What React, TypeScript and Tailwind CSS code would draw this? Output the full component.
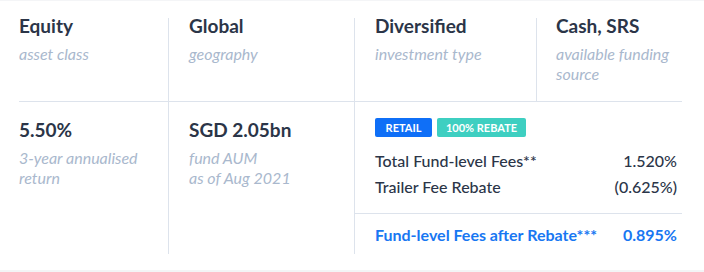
import React from "react";

const Title = ({ children }: { children: React.ReactNode }) => (
  <div className="text-[19px] leading-[16px] font-bold text-[#2b3548] whitespace-nowrap">{children}</div>
);

const Caption = ({ children, mt = "mt-[10px]" }: { children: React.ReactNode; mt?: string }) => (
  <div className={`${mt} text-[16px] leading-[20px] italic text-[#a9b8cd]`}>{children}</div>
);

export default function App() {
  return (
    <div className="w-[704px] h-[272px] bg-white border-t border-[#f4f5f7] font-['Lato',sans-serif] relative">
      <div className="ml-[19px] mt-[17px] w-[663px] grid grid-cols-[149px_186px_182px_146px]">
        {/* Row 1 */}
        <div className="h-[84px] border-b border-[#dde3ec]">
          <Title>Equity</Title>
          <Caption>asset class</Caption>
        </div>
        <div className="h-[84px] border-b border-l border-[#dde3ec] pl-[20px]">
          <Title>Global</Title>
          <Caption>geography</Caption>
        </div>
        <div className="h-[84px] border-b border-l border-[#dde3ec] pl-[20px]">
          <Title>Diversified</Title>
          <Caption>investment type</Caption>
        </div>
        <div className="h-[84px] border-b border-l border-[#dde3ec] pl-[19px]">
          <Title>Cash, SRS</Title>
          <Caption>available funding source</Caption>
        </div>

        {/* Row 2 */}
        <div className="h-[152px] pt-[20px]">
          <Title>5.50%</Title>
          <Caption>3-year annualised return</Caption>
        </div>
        <div className="h-[152px] border-l border-[#dde3ec] pl-[20px] pt-[20px]">
          <Title>SGD 2.05bn</Title>
          <Caption>
            fund AUM
            <br />
            as of Aug 2021
          </Caption>
        </div>
        <div className="col-span-2 h-[152px] border-l border-[#dde3ec]">
          <div className="border-b border-[#dde3ec] pl-[20px] pr-[5px] pt-[16px] pb-[13px]">
            <div className="flex gap-[5px]">
              <span className="h-[19px] w-[57px] flex items-center justify-center rounded-[2px] bg-[#0f6ff7] text-white text-[11px] font-bold leading-none">
                RETAIL
              </span>
              <span className="h-[19px] w-[89px] flex items-center justify-center rounded-[2px] bg-[#3ecfc1] text-white text-[11px] font-bold leading-none">
                100% REBATE
              </span>
            </div>
            <div className="mt-[11px] text-[16px] leading-[26px] font-medium text-[#2b3548]">
              <div className="flex justify-between">
                <span>Total Fund-level Fees**</span>
                <span>1.520%</span>
              </div>
              <div className="flex justify-between">
                <span>Trailer Fee Rebate</span>
                <span>(0.625%)</span>
              </div>
            </div>
          </div>
          <div className="pl-[20px] pr-[5px] pt-[8px] flex justify-between text-[16px] leading-[26px] font-bold text-[#1877f2]">
            <span>Fund-level Fees after Rebate***</span>
            <span>0.895%</span>
          </div>
        </div>
      </div>
      <div className="absolute left-0 right-0 top-[269px] h-[2px] bg-[#f3f4f6]" />
    </div>
  );
}
